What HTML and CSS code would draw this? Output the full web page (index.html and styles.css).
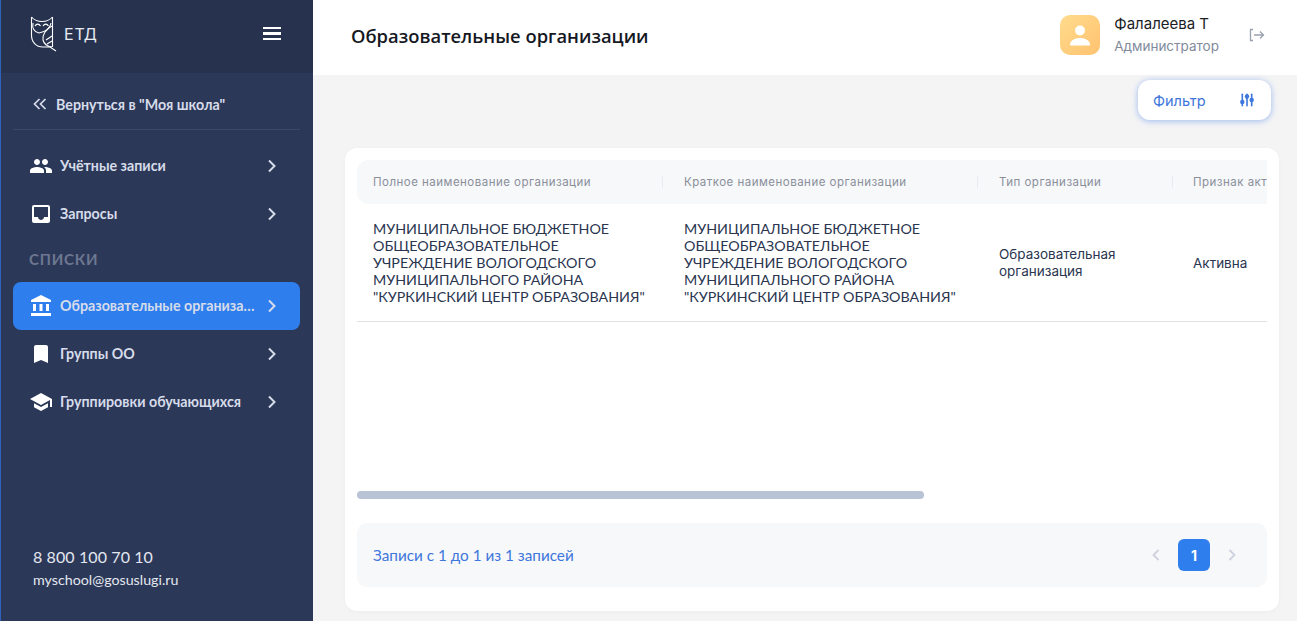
FILE: index.html
```html
<!DOCTYPE html>
<html lang="ru">
<head>
<meta charset="utf-8">
<title>Образовательные организации</title>
<link rel="stylesheet" href="styles.css">
</head>
<body>
<div class="app">
  <aside class="sidebar">
    <div class="brand">
      <svg class="logo" width="28" height="36" viewBox="0 0 28 36" fill="none" stroke="#fff" stroke-width="1.1">
        <path d="M1.500 1 V19 C1.500 26 6 31 13 31 H20 L26 35"/>
        <path d="M22.500 1 V31"/>
        <path d="M1.500 1 C5 5 9 5.500 12 5.500 C15 5.500 19 5 22.500 1"/>
        <path d="M5 10 C6.500 7.500 9 7.500 10.500 10 M13 10 C14.500 7.500 17 7.500 18.500 10"/>
        <path d="M3 7 C2 12 4 16 9 17 C14 16 20 14 21 7"/>
        <path d="M22 10 C16 13 12 19 13 24 C14 28 17 30.500 22 31"/>
        <path d="M16 24 L22 20 M17 28 L22 25"/>
      </svg>
      <span class="brand-name">ЕТД</span>
      <span class="burger"><i></i><i></i><i></i></span>
    </div>
    <div class="side-body">
      <a class="back">
        <svg width="14" height="12" viewBox="0 0 14 12" fill="none" stroke="#d6dcea" stroke-width="1.700"><path d="M6.500 1 L1.500 6 L6.500 11 M12.500 1 L7.500 6 L12.500 11"/></svg>
        <span>Вернуться в "Моя школа"</span>
      </a>
      <nav class="nav">
        <a class="item">
          <svg class="ico" width="24" height="24" viewBox="0 0 24 24" fill="#fff"><path d="M16 11c1.660 0 2.990-1.340 2.990-3S17.660 5 16 5s-3 1.340-3 3 1.340 3 3 3zm-8 0c1.660 0 2.990-1.340 2.990-3S9.660 5 8 5 5 6.340 5 8s1.340 3 3 3zm0 2c-2.330 0-7 1.170-7 3.500V19h14v-2.500C15 14.170 10.330 13 8 13zm8 0c-.29 0-.62.020-.97.050 1.160.84 1.970 1.970 1.970 3.450V19h6v-2.500c0-2.330-4.670-3.500-7-3.500z"/></svg>
          <span class="label">Учётные записи</span>
          <svg class="chev" width="10" height="14" viewBox="0 0 10 14" fill="none" stroke="#d6dcea" stroke-width="2"><path d="M2 1.500 L7.500 7 L2 12.500"/></svg>
        </a>
        <a class="item">
          <svg class="ico" width="24" height="24" viewBox="0 0 24 24" fill="#fff"><path d="M19 3H5c-1.100 0-2 .9-2 2v14c0 1.100.9 2 2 2h14c1.100 0 2-.9 2-2V5c0-1.100-.9-2-2-2zm0 12h-4c0 1.660-1.350 3-3 3s-3-1.340-3-3H5V5h14v10z"/></svg>
          <span class="label">Запросы</span>
          <svg class="chev" width="10" height="14" viewBox="0 0 10 14" fill="none" stroke="#d6dcea" stroke-width="2"><path d="M2 1.500 L7.500 7 L2 12.500"/></svg>
        </a>
        <div class="section">СПИСКИ</div>
        <a class="item active">
          <svg class="ico" width="24" height="24" viewBox="0 0 24 24" fill="#fff"><path d="M4 10v7h3v-7H4zm6.500 0v7h3v-7h-3zM2 22h20v-3H2v3zm15-12v7h3v-7h-3zM12 1 2 6v2h20V6L12 1z"/></svg>
          <span class="label">Образовательные организации</span>
          <svg class="chev" width="10" height="14" viewBox="0 0 10 14" fill="none" stroke="#d6dcea" stroke-width="2"><path d="M2 1.500 L7.500 7 L2 12.500"/></svg>
        </a>
        <a class="item">
          <svg class="ico" width="24" height="24" viewBox="0 0 24 24" fill="#fff"><path d="M17 3H7c-1.100 0-2 .9-2 2v16l7-3 7 3V5c0-1.100-.9-2-2-2z"/></svg>
          <span class="label">Группы ОО</span>
          <svg class="chev" width="10" height="14" viewBox="0 0 10 14" fill="none" stroke="#d6dcea" stroke-width="2"><path d="M2 1.500 L7.500 7 L2 12.500"/></svg>
        </a>
        <a class="item">
          <svg class="ico" width="24" height="24" viewBox="0 0 24 24" fill="#fff"><path d="M5 13.180v4L12 21l7-3.820v-4L12 17l-7-3.820zM12 3 1 9l11 6 9-4.910V17h2V9L12 3z"/></svg>
          <span class="label">Группировки обучающихся</span>
          <svg class="chev" width="10" height="14" viewBox="0 0 10 14" fill="none" stroke="#d6dcea" stroke-width="2"><path d="M2 1.500 L7.500 7 L2 12.500"/></svg>
        </a>
      </nav>
      <div class="contacts">
        <div class="phone">8 800 100 70 10</div>
        <div class="mail">myschool@gosuslugi.ru</div>
      </div>
    </div>
  </aside>
  <div class="main">
    <header class="topbar">
      <h1>Образовательные организации</h1>
      <div class="user">
        <span class="avatar">
          <svg width="24" height="24" viewBox="0 0 24 24" fill="#fff"><circle cx="12" cy="7.500" r="5"/><path d="M2 21.500c0-4 5-6.500 10-6.500s10 2.500 10 6.500c0 .8-.5 1-1 1H3c-.5 0-1-.2-1-1z"/></svg>
        </span>
        <div class="who">
          <div class="name">Фалалеева Т</div>
          <div class="role">Администратор</div>
        </div>
        <svg class="exit" width="16" height="14" viewBox="0 0 16 14" fill="none" stroke="#9aa1ae" stroke-width="1.300"><path d="M4 1.500 H1.500 V12.500 H4"/><path d="M5 7 H14.500 M11 3.500 L14.500 7 L11 10.500"/></svg>
      </div>
    </header>
    <div class="content">
      <div class="toolbar">
        <button class="filter">
          <span>Фильтр</span>
          <svg width="14" height="14" viewBox="0 0 14 14" fill="#3d76dc"><rect x="1.500" y="0.500" width="1.600" height="13" rx=".8"/><rect x="6.200" y="0.500" width="1.600" height="13" rx=".8"/><rect x="10.900" y="0.500" width="1.600" height="13" rx=".8"/><circle cx="2.300" cy="9" r="2.200"/><circle cx="7" cy="3.500" r="2.200"/><circle cx="11.700" cy="7" r="2.200"/></svg>
        </button>
      </div>
      <section class="card">
        <div class="table-wrap">
          <table class="table">
            <thead>
              <tr>
                <th class="c1"><span>Полное наименование организации</span></th>
                <th class="c2"><span>Краткое наименование организации</span></th>
                <th class="c3"><span>Тип организации</span></th>
                <th class="c4"><span>Признак активности</span></th>
              </tr>
            </thead>
            <tbody>
              <tr>
                <td class="upper">МУНИЦИПАЛЬНОЕ БЮДЖЕТНОЕ ОБЩЕОБРАЗОВАТЕЛЬНОЕ УЧРЕЖДЕНИЕ ВОЛОГОДСКОГО МУНИЦИПАЛЬНОГО РАЙОНА "КУРКИНСКИЙ ЦЕНТР ОБРАЗОВАНИЯ"</td>
                <td class="upper">МУНИЦИПАЛЬНОЕ БЮДЖЕТНОЕ ОБЩЕОБРАЗОВАТЕЛЬНОЕ УЧРЕЖДЕНИЕ ВОЛОГОДСКОГО МУНИЦИПАЛЬНОГО РАЙОНА "КУРКИНСКИЙ ЦЕНТР ОБРАЗОВАНИЯ"</td>
                <td class="plain">Образовательная организация</td>
                <td class="plain">Активна</td>
              </tr>
            </tbody>
          </table>
        </div>
        <div class="scroll"><div class="thumb"></div></div>
        <div class="pager">
          <span class="info">Записи с 1 до 1 из 1 записей</span>
          <div class="pages">
            <svg width="8" height="12" viewBox="0 0 8 12" fill="none" stroke="#cdd2dc" stroke-width="1.800"><path d="M6.500 1 L1.500 6 L6.500 11"/></svg>
            <span class="page">1</span>
            <svg width="8" height="12" viewBox="0 0 8 12" fill="none" stroke="#cdd2dc" stroke-width="1.800"><path d="M1.500 1 L6.500 6 L1.500 11"/></svg>
          </div>
        </div>
      </section>
    </div>
  </div>
</div>
</body>
</html>
```
FILE: styles.css
```css
* { box-sizing: border-box; }
html, body { margin: 0; height: 100%; overflow: hidden; }
body { font-family: Lato, "Noto Sans", sans-serif; color: #2a3550; background: #f4f4f5; }
.app { display: flex; height: 621px; }

.sidebar { width: 313px; flex: none; display: flex; flex-direction: column; background: #2c3858; border-left: 1px solid #2f62b8; }
.brand { height: 73px; flex: none; display: flex; align-items: center; padding: 0 32px 6px 29px; background: #27324f; }
.logo { flex: none; margin-top: 1px; }
.brand-name { margin-left: 6px; color: #e9ecf3; font-family: Inter, sans-serif; font-size: 16px; letter-spacing: 1px; }
.burger { margin-left: auto; display: flex; flex-direction: column; gap: 3.500px; width: 18px; }
.burger i { display: block; height: 2.200px; background: #fff; }
.side-body { flex: 1; display: flex; flex-direction: column; padding: 0 13px 0 12px; }
.back { height: 57px; flex: none; display: flex; align-items: center; gap: 9px; padding: 6px 0 0 20px; border-bottom: 1px solid #3c4868; color: #d6dcea; font-size: 14.250px; font-weight: 700; }
.nav { display: flex; flex-direction: column; padding-top: 12px; }
.item { height: 48px; display: flex; align-items: center; padding: 0 23px 2px 16px; border-radius: 8px; color: #d6dcea; font-size: 14.250px; font-weight: 700; }
.ico { flex: none; margin: 2px 7px 0 0; }
.label { flex: 1; min-width: 0; white-space: nowrap; overflow: hidden; text-overflow: ellipsis; }
.chev { flex: none; margin: 2px 0 0 12px; }
.active { background: #2e7eee; }
.section { height: 44px; padding: 12px 0 0 16px; color: #6d7791; font-size: 15px; font-weight: 700; letter-spacing: .8px; line-height: 18px; }
.contacts { margin-top: auto; padding: 0 0 30px 20px; color: #e3e7f0; }
.phone { font-size: 16px; line-height: 24px; letter-spacing: .1px; }
.mail { font-size: 14.250px; line-height: 22px; }

.main { flex: 1; min-width: 0; display: flex; flex-direction: column; }
.topbar { height: 75px; flex: none; display: flex; align-items: center; background: #fff; padding: 0 32px 5px 38px; }
h1 { margin: 0; color: #15181f; font-family: "Open Sans", sans-serif; font-size: 18.370px; font-weight: 600; }
.user { margin-left: auto; display: flex; align-items: center; }
.avatar { width: 40px; height: 40px; border-radius: 10px; display: flex; align-items: center; justify-content: center; background: linear-gradient(135deg, #ffdc8c, #ffc270); }
.who { margin-left: 14px; font-family: Inter, sans-serif; }
.name { color: #1a1d26; font-size: 15px; line-height: 20px; }
.role { margin-top: 2px; color: #828a9c; font-size: 13.500px; line-height: 20px; }
.exit { margin-left: 30px; }

.content { flex: 1; min-height: 0; display: flex; flex-direction: column; padding: 5px 18px 10px 32px; }
.toolbar { display: flex; justify-content: flex-end; padding-right: 8px; }
.filter { width: 133px; height: 40px; display: flex; align-items: center; justify-content: space-between; padding: 0 17px 0 15px; border: 0; border-radius: 12px; background: #fff; box-shadow: 0 1px 6px rgba(46, 110, 230, .45); color: #3d76dc; font-family: Inter, sans-serif; font-size: 14.500px; }
.card { margin-top: 28px; flex: 1; min-height: 0; display: flex; flex-direction: column; padding: 12px 12px 24px; border-radius: 12px; background: #fff; box-shadow: 0 1px 4px rgba(0, 0, 0, .03); }
.table-wrap { height: 331px; flex: none; overflow: hidden; }
.table { width: 1100px; table-layout: fixed; border-collapse: collapse; }
.c1 { width: 305px; } .c2 { width: 315px; } .c3 { width: 195px; } .c4 { width: 285px; }
th { height: 44px; padding: 0; text-align: left; background: #f6f8fa; color: #8b8f9a; font-family: Inter, sans-serif; font-size: 11.500px; font-weight: 400; letter-spacing: .48px; }
th span { display: block; padding-left: 16px; white-space: nowrap; border-left: 1px solid #e8ebef; line-height: 12px; }
th.c1 span { border-left: 0; }
th.c2 span, th.c3 span { padding-left: 21px; }
th.c4 span { padding-left: 20px; }
thead tr th:first-child { border-radius: 12px 0 0 12px; }
td { height: 117px; padding: 0 16px; border-bottom: 1px solid #dfe1e5; vertical-align: middle; }
td:nth-child(2) { padding-left: 22px; padding-right: 10px; }
td:nth-child(3) { padding: 2px 16px 0 22px; }
td:nth-child(4) { padding: 2px 16px 0 21px; }
.upper { color: #2a3550; font-size: 14.270px; line-height: 17px; }
.plain { color: #2a3550; font-family: Inter, sans-serif; font-size: 13.500px; line-height: 17px; }
.scroll { height: 8px; flex: none; }
.thumb { width: 567px; height: 8px; border-radius: 4px; background: #b8c3d6; }
.pager { margin-top: 24px; flex: 1; min-height: 0; display: flex; align-items: center; justify-content: space-between; padding: 0 31px 0 16px; border-radius: 10px; background: #f6f8fa; }
.info { color: #3d76dc; font-size: 15.300px; }
.pages { display: flex; align-items: center; gap: 18px; }
.page { width: 32px; height: 32px; display: flex; align-items: center; justify-content: center; border-radius: 6px; background: #2e7eee; color: #fff; font-family: Inter, sans-serif; font-size: 14px; font-weight: 700; }
```
